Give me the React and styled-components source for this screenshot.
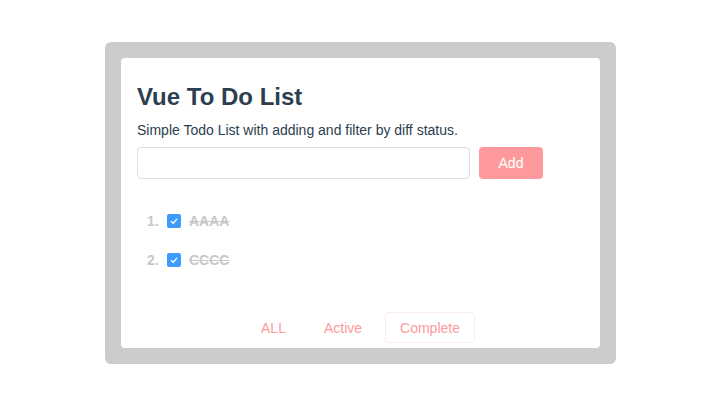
import styled, { createGlobalStyle } from "styled-components";

const Global = createGlobalStyle`
body{
    margin:0;
    background:#fff;
    font-family: "Liberation Sans", Arial, sans-serif;
}
`;

const Frame = styled.div`
width: 511px;
margin: 42px 0 0 105px;
padding: 16px;
box-sizing: border-box;
background: #cccccc;
border-radius: 6px;
`;

const Card = styled.div`
background: #fff;
border-radius: 4px;
padding: 25px 16px 5px;
`;

const Title = styled.h1`
margin: 0;
font-size: 24px;
line-height: 28px;
font-weight: bold;
color: #2c3e50;
`;

const Sub = styled.p`
margin: 9px 0 7px;
font-size: 14px;
line-height: 20px;
color: #2c3e50;
`;

const AddRow = styled.div`
display: flex;
gap: 9px;
`;

const Input = styled.input`
width: 333px;
height: 32px;
box-sizing: border-box;
border: 1px solid #dcdfe6;
border-radius: 4px;
outline: none;
padding: 0 10px;
font-size: 14px;
`;

const AddButton = styled.button`
width: 64px;
height: 32px;
border: none;
border-radius: 4px;
background: #fe9a9d;
color: #fff;
font-family: inherit;
font-size: 14px;
`;

const List = styled.ul`
list-style: none;
margin: 22px 0 0;
padding: 0 0 0 10px;
`;

const Item = styled.li`
display: flex;
align-items: center;
height: 39px;
font-size: 14px;
font-weight: bold;
color: #c8c8c8;
`;

const Num = styled.span`
width: 20px;
`;

const Check = styled.span`
width: 14px;
height: 14px;
border-radius: 2px;
background: #3d9bfb;
display: flex;
align-items: center;
justify-content: center;
margin-right: 8px;
`;

const Label = styled.span`
text-decoration: line-through;
`;

const Footer = styled.div`
display: flex;
justify-content: center;
gap: 8px;
margin-top: 33px;
`;

const Tab = styled.button`
height: 31px;
padding: 0 14px;
border: 1px solid ${p => (p.$active ? "#fcebec" : "transparent")};
border-radius: 4px;
background: #fff;
color: #fe9a9d;
font-family: inherit;
font-size: 14px;
`;

const todos = ["AAAA", "CCCC"];

export default function App() {
    return (
        <>
        <Global />
        <Frame>
            <Card>
                <Title>Vue To Do List</Title>
                <Sub>Simple Todo List with adding and filter by diff status.</Sub>
                <AddRow>
                    <Input />
                    <AddButton>Add</AddButton>
                </AddRow>
                <List>
                    {todos.map((t, i) => (
                        <Item key={t}>
                            <Num>{i + 1}.</Num>
                            <Check>
                                <svg width="10" height="10" viewBox="0 0 10 10">
                                    <path d="M2 5.2 L4.2 7.2 L8 2.8" fill="none" stroke="#fff" strokeWidth="1.3" />
                                </svg>
                            </Check>
                            <Label>{t}</Label>
                        </Item>
                    ))}
                </List>
                <Footer>
                    <Tab>ALL</Tab>
                    <Tab>Active</Tab>
                    <Tab $active>Complete</Tab>
                </Footer>
            </Card>
        </Frame>
        </>
    );
}
